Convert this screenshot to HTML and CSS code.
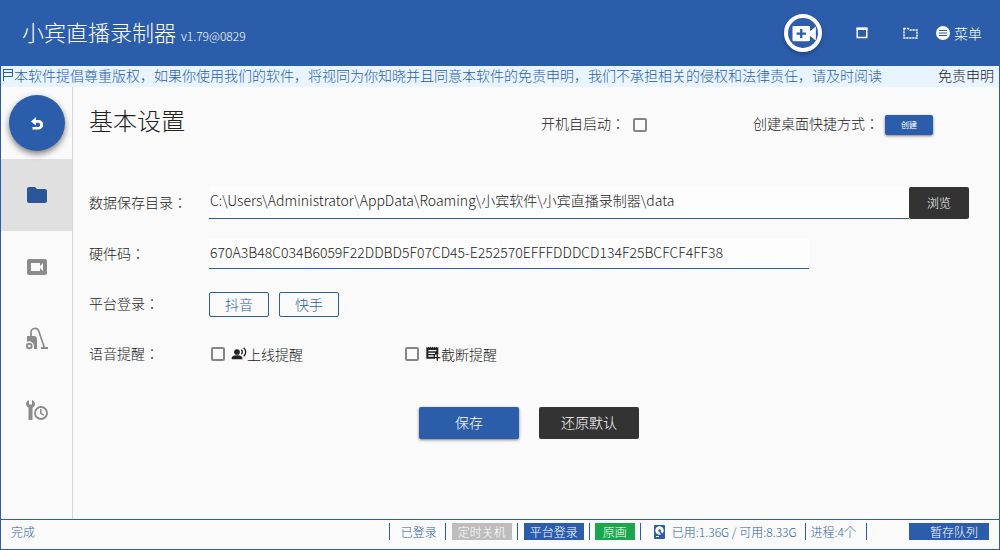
FILE: index.html
```html
<!DOCTYPE html>
<html>
<head>
<meta charset="utf-8">
<title>小宾直播录制器</title>
<link rel="stylesheet" href="styles.css">
</head>
<body>
<div class="app">
  <header class="header">
    <h1 class="brand">小宾直播录制器 <small class="version">v1.79@0829</small></h1>
    <button class="record" aria-label="录制">
      <svg width="28" height="28" viewBox="0 0 24 24"><path fill="#fff" d="M18 10.500V7c0-.55-.45-1-1-1H4c-.55 0-1 .45-1 1v11c0 .55.45 1 1 1h13c.55 0 1-.45 1-1v-3.500l5 4V6.500l-5 4z"/><path fill="#2b5dab" d="M14.500 13.500h-3v3h-2v-3h-3v-2h3v-3h2v3h3z"/></svg>
    </button>
    <button class="icon-button window" aria-label="窗口">
      <svg width="12" height="12" viewBox="0 0 12 12"><path fill="none" stroke="#fff" stroke-width="1.500" d="M1.250 1.500h9.500v9H1.250z"/><path fill="#fff" d="M.5.500h11V3H.5z"/></svg>
    </button>
    <button class="icon-button folder" aria-label="文件夹">
      <svg width="15" height="12" viewBox="0 0 15 12"><path fill="none" stroke="#fff" stroke-width="1.400" stroke-dasharray="2.200 .8" d="M1 1.500h4l2 1.500h7v8H1z"/></svg>
    </button>
    <button class="menu">
      <svg width="14" height="14" viewBox="0 0 14 14"><circle cx="7" cy="7" r="7" fill="#fff"/><path stroke="#2b5dab" stroke-width="1.200" d="M3 4.500h8M3 7h8M3 9.500h8"/></svg>
      <span>菜单</span>
    </button>
  </header>
  <div class="notice">
    <svg width="12" height="14" viewBox="0 0 12 14"><path fill="none" stroke="#2b5dab" d="M1.500 13V1.500M1 1.500h10M1 4.500h9.500M1 8.500h9.500V2"/></svg>
    <p class="notice-text">本软件提倡尊重版权，如果你使用我们的软件，将视同为你知晓并且同意本软件的免责申明，我们不承担相关的侵权和法律责任，请及时阅读</p>
    <a class="disclaimer" href="#">免责申明</a>
  </div>
  <div class="body">
    <nav class="sidebar">
      <div class="side-top">
        <button class="back" aria-label="返回"><svg width="12" height="13" viewBox="0 0 12 13"><path fill="#fff" d="M0 4.500 5 0v3h2.500a4.500 4.500 0 0 1 0 9.500H1.500V10h6a2.200 2.200 0 0 0 0-4.300H5V8.500z"/></svg></button>
      </div>
      <a class="side-item active" href="#" aria-label="基本设置"><svg width="24" height="24" viewBox="0 0 24 24"><path fill="#2b5599" d="M10 4H4c-1.100 0-2 .9-2 2v12c0 1.100.9 2 2 2h16c1.100 0 2-.9 2-2V8c0-1.100-.9-2-2-2h-8z"/></svg></a>
      <a class="side-item" href="#" aria-label="视频"><svg width="24" height="24" viewBox="0 0 24 24"><path fill="#8b8b8b" fill-rule="evenodd" d="M4 4h16a2 2 0 0 1 2 2v12a2 2 0 0 1-2 2H4a2 2 0 0 1-2-2V6a2 2 0 0 1 2-2zm2 4v8h9v-3l3 3V8l-3 3V8z"/></svg></a>
      <a class="side-item" href="#" aria-label="清理"><svg width="24" height="24" viewBox="0 0 24 24"><path fill="none" stroke="#8b8b8b" stroke-width="1.700" d="M6 11V5.500a4 4 0 0 1 7.800-1.300L19.500 21"/><path fill="#8b8b8b" d="M2 9h7c2 0 3 1.500 3 3.500V22H9v-2.500a5 5 0 0 0-7-4.800zM16 20h7v2h-7z"/><circle cx="4.300" cy="19" r="2.300" fill="none" stroke="#8b8b8b" stroke-width="2"/></svg></a>
      <a class="side-item" href="#" aria-label="定时工具"><svg width="24" height="24" viewBox="0 0 24 24"><path fill="#8b8b8b" d="M4 1v4.500h3V1c1.800.7 3 2.200 3 4 0 1.700-1 3.100-2.500 3.700V21h-4V8.700A4 4 0 0 1 1 5c0-1.800 1.200-3.300 3-4z"/><circle cx="16" cy="14" r="6" fill="none" stroke="#8b8b8b" stroke-width="1.800"/><path fill="none" stroke="#8b8b8b" stroke-width="1.500" d="M15.800 10v4.300l3 1.900"/></svg></a>
    </nav>
    <main class="content">
      <div class="title-row">
        <h2 class="title">基本设置</h2>
        <label class="autostart"><span class="caption">开机自启动：</span><input class="check" type="checkbox"></label>
        <div class="shortcut"><span class="caption">创建桌面快捷方式：</span><button class="create">创建</button></div>
      </div>
      <form class="form">
        <div class="row">
          <label class="label" for="path">数据保存目录：</label>
          <input class="text-input path" id="path" type="text" value="C:\Users\Administrator\AppData\Roaming\小宾软件\小宾直播录制器\data">
          <button class="dark browse" type="button">浏览</button>
        </div>
        <div class="row">
          <label class="label" for="code">硬件码：</label>
          <input class="text-input code" id="code" type="text" value="670A3B48C034B6059F22DDBD5F07CD45-E252570EFFFDDDCD134F25BCFCF4FF38">
        </div>
        <div class="row">
          <span class="label">平台登录：</span>
          <div class="logins"><button class="outline" type="button">抖音</button><button class="outline" type="button">快手</button></div>
        </div>
        <div class="row">
          <span class="label">语音提醒：</span>
          <label class="option"><input class="check" type="checkbox"><svg width="16" height="16" viewBox="0 0 24 24"><circle cx="9" cy="9" r="4.300" fill="#222"/><path fill="#222" d="M1 20v-2c0-3 5-4 8-4s8 1 8 4v2z"/><path fill="none" stroke="#222" stroke-width="2" d="M15.500 5.500c2 2 2 5 0 7M19 2.500c4 4 4 9 0 13"/></svg><span>上线提醒</span></label>
          <label class="option"><input class="check" type="checkbox"><svg width="16" height="16" viewBox="0 0 24 24"><path fill="#222" fill-rule="evenodd" d="M2 1l1.500 1.500L5 1l1.500 1.500L8 1l1.500 1.500L11 1l1.500 1.500L14 1l1.500 1.500L17 1l1.500 1.500L20 1v12h-5v6H2zM5 6v2h12V6zm0 4v2h10v-2zm0 4v2h8v-2z"/><path stroke="#222" stroke-width="2" d="M18.500 13v9M14 17.500h9"/></svg><span>截断提醒</span></label>
        </div>
        <div class="actions"><button class="save" type="button">保存</button><button class="dark" type="button">还原默认</button></div>
      </form>
    </main>
  </div>
  <footer class="status">
    <span class="state">完成</span>
    <div class="cell login">已登录</div>
    <div class="cell"><button class="chip muted">定时关机</button></div>
    <div class="cell"><button class="chip">平台登录</button></div>
    <div class="cell quality"><button class="chip green">原画</button></div>
    <div class="cell disk"><svg width="11" height="14" viewBox="0 0 11 14"><rect width="11" height="14" rx="1" fill="#2b5dab"/><circle cx="5.500" cy="5.500" r="4.200" fill="#fafafa"/><circle cx="5.500" cy="5.500" r="1.200" fill="#2b5dab"/><path stroke="#2b5dab" stroke-width="1.500" d="m5.500 6 3.500 5"/><path fill="#fafafa" d="M2 11h3v1H2z"/></svg><span>已用:1.36G / 可用:8.33G</span></div>
    <div class="cell process">进程:4个</div>
    <button class="chip queue">暂存队列</button>
  </footer>
</div>
</body>
</html>
```

FILE: styles.css
```css
* { box-sizing: border-box; }
body {
  margin: 0;
  font-family: "Noto Sans CJK JP", "Noto Sans CJK SC", sans-serif;
  font-size: 14px;
  font-weight: 300;
  line-height: 20px;
  color: #222;
  background: #fafafa;
}
button, input { font: inherit; margin: 0; }
button { border: 0; padding: 0; color: #fff; background: none; cursor: pointer; }
h1, h2, p { margin: 0; font-weight: 300; }
a { color: inherit; text-decoration: none; }
svg { display: block; flex: none; }

.app {
  display: flex;
  flex-direction: column;
  min-height: 100vh;
  border: 1px solid #2b5dab;
  border-top: 0;
}

.header {
  display: flex;
  align-items: center;
  height: 66px;
  padding-right: 17px;
  color: #fff;
  background: #2b5dab;
}
.brand { margin-right: auto; padding-left: 21px; font-size: 22px; line-height: 32px; }
.version { font-size: 12px; }
.record {
  display: grid;
  place-items: center;
  width: 38px;
  height: 38px;
  border: 4px solid #fff;
  border-radius: 50%;
  margin-right: 34px;
  box-shadow: 0 2px 4px rgba(0, 0, 0, .3);
}
.window { margin-right: 35px; }
.folder { margin-right: 18px; }
.menu { display: flex; align-items: center; gap: 4px; }

.notice {
  display: flex;
  align-items: center;
  height: 21px;
  padding: 0 5px 3px 1px;
  color: #2b5dab;
  background: #e8f4ff;
}
.notice-text { flex: 1; white-space: nowrap; overflow: hidden; }
.disclaimer { color: #222; }

.body { display: flex; flex: 1; }
.sidebar { width: 72px; border-right: 1px solid #d8d8d8; }
.side-top, .side-item { display: grid; place-items: center; height: 72px; }
.side-item.active { background: #e0e0e0; }
.back {
  display: grid;
  place-items: center;
  width: 56px;
  height: 56px;
  border-radius: 50%;
  background: #2b5dab;
  box-shadow: 0 3px 6px rgba(0, 0, 0, .5);
}

.content { flex: 1; padding: 16px 30px 0 16px; }
.title-row { display: flex; align-items: center; height: 36px; margin-bottom: 48px; }
.title { flex: 1; padding-bottom: 2px; font-size: 24px; line-height: 34px; }
.autostart, .shortcut { display: flex; align-items: center; padding-top: 8px; }
.autostart { gap: 8px; margin-right: 106px; }
.shortcut { gap: 6px; margin-right: 36px; }
.caption { padding-bottom: 4px; }
.create {
  width: 48px;
  height: 20px;
  border-radius: 2px;
  font-size: 8px;
  font-weight: 400;
  line-height: 20px;
  background: #2b5dab;
  box-shadow: 0 1px 3px rgba(0, 0, 0, .5);
}
.check {
  appearance: none;
  width: 14px;
  height: 14px;
  border: 2px solid #858585;
  border-radius: 2px;
  background: #fafafa;
}
.check:checked { background: #2b5dab; }

.form { display: flex; flex-direction: column; gap: 20px; }
.row { display: flex; align-items: center; min-height: 30px; }
.label { width: 120px; flex: none; padding-bottom: 2px; }
.text-input {
  height: 32px;
  padding: 0 1px 5px;
  border: 0;
  border-bottom: 1px solid #2b5dab;
  color: #222;
  background: #fdfdfd;
  outline: 0;
}
.path { flex: 1; min-width: 0; }
.code { width: 600px; height: 30px; padding-bottom: 3px; }
.dark, .save { width: 100px; height: 32px; border-radius: 2px; background: #333; }
.browse { width: 60px; font-size: 12px; }
.logins { display: flex; gap: 10px; }
.outline {
  width: 60px;
  height: 25px;
  border: 1px solid #2b5dab;
  border-radius: 2px;
  line-height: 23px;
  color: #2b5dab;
}
.option { display: flex; align-items: center; width: 194px; padding-left: 2px; }
.option .check { margin-right: 6px; }
.actions { display: flex; justify-content: center; gap: 20px; margin-top: 18px; }
.actions button { padding-bottom: 2px; }
.save { background: #2b5dab; box-shadow: 0 1px 3px rgba(0, 0, 0, .5); }

.status {
  display: flex;
  align-items: center;
  height: 30px;
  padding: 0 10px 6px;
  border-top: 1px solid #2b5dab;
  font-size: 12px;
  line-height: 17px;
  color: #2b5dab;
}
.state { margin-right: auto; }
.cell {
  display: flex;
  align-items: center;
  height: 17px;
  padding: 0 5px 0 6px;
  border-left: 1px solid #2b5dab;
}
.login { padding: 0 8px 0 11px; }
.quality { padding: 0 5px; }
.chip { width: 60px; height: 17px; line-height: 17px; background: #2b5dab; }
.muted { background: #bdbdbd; }
.green { width: 40px; background: #18a84b; }
.disk { gap: 7px; padding: 0 8px 0 13px; }
.process { padding: 0 10px 0 5px; border-right: 1px solid #2b5dab; margin-right: 42px; }
.queue { width: 80px; padding-left: 10px; }
```
